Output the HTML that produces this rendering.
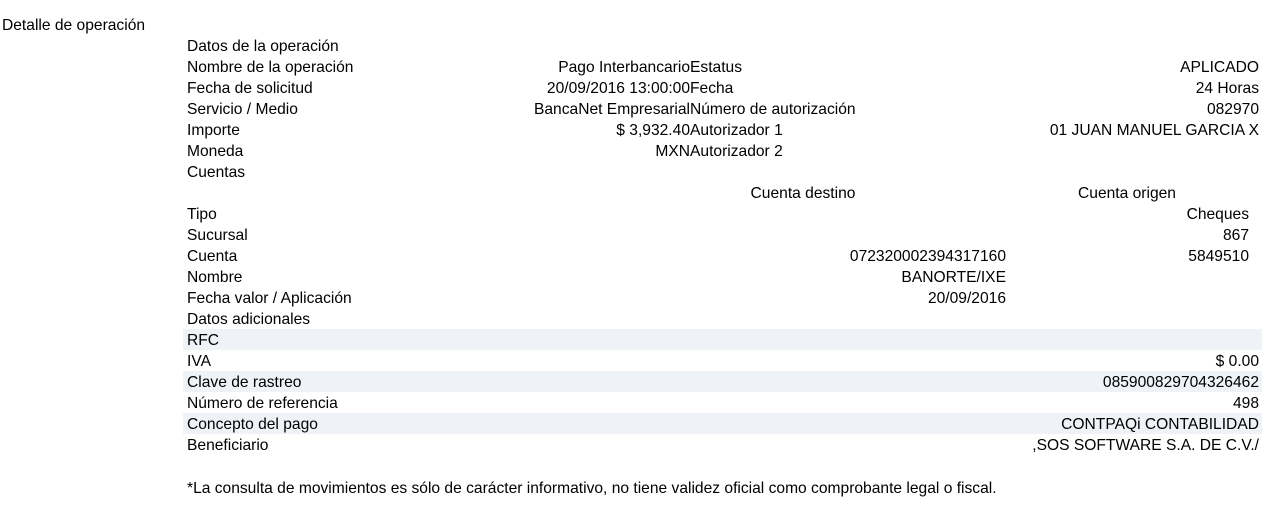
<!DOCTYPE html>
<html><head><meta charset="utf-8"><style>
body{margin:0;width:1269px;height:511px;background:#fff;font-family:"Liberation Sans",sans-serif;font-size:15.6px;color:#000;position:relative;overflow:hidden}
div{position:absolute;white-space:nowrap;line-height:21px}
.l{left:187px}
.r{text-align:right}
.s{left:183px;width:1079px;height:21px;background:#eff2f7}
</style></head><body>
<div style="left:2px;top:15px">Detalle de operación</div>
<div class="l" style="top:36px">Datos de la operación</div>
<div class="l" style="top:57px">Nombre de la operación</div>
<div class="l" style="top:78px">Fecha de solicitud</div>
<div class="l" style="top:99px">Servicio / Medio</div>
<div class="l" style="top:120px">Importe</div>
<div class="l" style="top:141px">Moneda</div>
<div class="l" style="top:162px">Cuentas</div>
<div class="r" style="right:579px;top:57px">Pago Interbancario</div><div style="left:690px;top:57px">Estatus</div>
<div class="r" style="right:579px;top:78px">20/09/2016 13:00:00</div><div style="left:690px;top:78px">Fecha</div>
<div class="r" style="right:579px;top:99px">BancaNet Empresarial</div><div style="left:690px;top:99px">Número de autorización</div>
<div class="r" style="right:579px;top:120px">$ 3,932.40</div><div style="left:690px;top:120px">Autorizador 1</div>
<div class="r" style="right:579px;top:141px">MXN</div><div style="left:690px;top:141px">Autorizador 2</div>
<div class="r" style="right:10px;top:57px">APLICADO</div>
<div class="r" style="right:10px;top:78px">24 Horas</div>
<div class="r" style="right:10px;top:99px">082970</div>
<div class="r" style="right:10px;top:120px">01 JUAN MANUEL GARCIA X</div>
<div style="left:703px;width:200px;text-align:center;top:183px">Cuenta destino</div>
<div style="left:1027px;width:200px;text-align:center;top:183px">Cuenta origen</div>
<div class="l" style="top:204px">Tipo</div>
<div class="l" style="top:225px">Sucursal</div>
<div class="l" style="top:246px">Cuenta</div>
<div class="l" style="top:267px">Nombre</div>
<div class="l" style="top:288px">Fecha valor / Aplicación</div>
<div class="r" style="right:20px;top:204px">Cheques</div>
<div class="r" style="right:20px;top:225px">867</div>
<div class="r" style="right:20px;top:246px">5849510</div>
<div class="r" style="right:263px;top:246px">072320002394317160</div>
<div class="r" style="right:263px;top:267px">BANORTE/IXE</div>
<div class="r" style="right:263px;top:288px">20/09/2016</div>
<div class="l" style="top:309px">Datos adicionales</div>
<div class="s" style="top:329px"></div>
<div class="s" style="top:371px"></div>
<div class="s" style="top:413px"></div>
<div class="l" style="top:330px">RFC</div>
<div class="l" style="top:351px">IVA</div>
<div class="l" style="top:372px">Clave de rastreo</div>
<div class="l" style="top:393px">Número de referencia</div>
<div class="l" style="top:414px">Concepto del pago</div>
<div class="l" style="top:435px">Beneficiario</div>
<div class="r" style="right:10px;top:351px">$ 0.00</div>
<div class="r" style="right:10px;top:372px">085900829704326462</div>
<div class="r" style="right:10px;top:393px">498</div>
<div class="r" style="right:10px;top:414px">CONTPAQi CONTABILIDAD</div>
<div class="r" style="right:10px;top:435px">,SOS SOFTWARE S.A. DE C.V./</div>
<div class="l" style="top:478px">*La consulta de movimientos es sólo de carácter informativo, no tiene validez oficial como comprobante legal o fiscal.</div>
</body></html>
